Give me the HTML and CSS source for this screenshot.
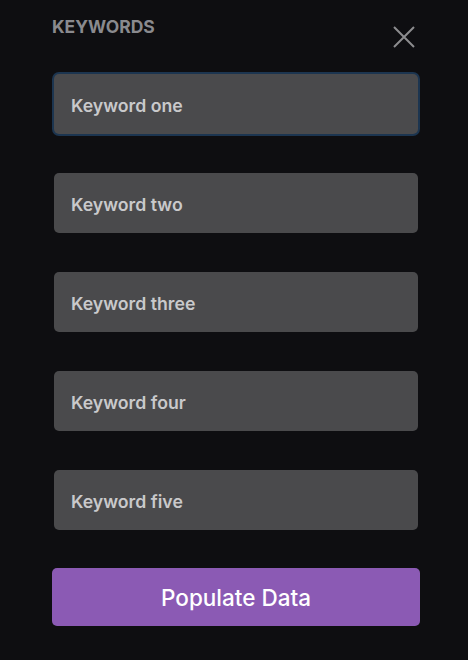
FILE: index.html
```html
<!DOCTYPE html>
<html>
<head>
<meta charset="utf-8">
<link rel="stylesheet" href="styles.css">
</head>
<body>
<div class="panel">
  <div class="header">
    <div class="title">KEYWORDS</div>
    <button class="close" aria-label="Close">
      <svg width="22" height="22" viewBox="0 0 22 22"><path d="M1 1L21 21M21 1L1 21" stroke="#8c8c8f" stroke-width="2" fill="none"/></svg>
    </button>
  </div>
  <div class="fields">
    <div class="field focused">Keyword one</div>
    <div class="field">Keyword two</div>
    <div class="field">Keyword three</div>
    <div class="field">Keyword four</div>
    <div class="field">Keyword five</div>
  </div>
  <button class="populate">Populate Data</button>
</div>
</body>
</html>
```
FILE: styles.css
```css
html, body {
  margin: 0;
  padding: 0;
  background: #0e0e11;
  height: 100%;
}
body {
  font-family: Inter, "Noto Sans", sans-serif;
}
.panel {
  padding: 17px 48px 0 52px;
  display: flex;
  flex-direction: column;
}
.header {
  display: flex;
  justify-content: space-between;
  align-items: flex-start;
  height: 55px;
}
.title {
  color: #8a8a8e;
  font-size: 17.5px;
  font-weight: 700;
  letter-spacing: 0;
  line-height: 20px;
}
.close {
  background: none;
  border: none;
  padding: 0;
  margin-top: 9px;
  margin-right: 5px;
  width: 22px;
  height: 22px;
  display: flex;
}
.fields {
  display: flex;
  flex-direction: column;
  gap: 39px;
  padding: 0 2px;
}
.field {
  height: 60px;
  background: #4a4a4c;
  border-radius: 5px;
  display: flex;
  align-items: center;
  padding-left: 17px;
  padding-top: 2px;
  color: #c9c9cb;
  font-size: 17.7px;
  font-weight: 600;
  box-sizing: border-box;
}
.field.focused {
  box-shadow: 0 0 0 2px #1c3550;
  margin-top: 2px;
}
.populate {
  margin-top: 38px;
  height: 58px;
  background: #8b5ab4;
  border: none;
  border-radius: 5px;
  color: #ffffff;
  font-family: Inter, "Noto Sans", sans-serif;
  font-size: 22.5px;
  font-weight: 500;
}
```
